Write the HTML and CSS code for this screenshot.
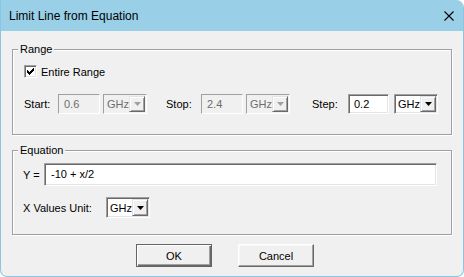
FILE: index.html
```html
<!DOCTYPE html>
<html lang="en">
<head>
<meta charset="utf-8">
<title>Limit Line from Equation</title>
<link rel="stylesheet" href="styles.css">
</head>
<body>
<div class="window">
  <div class="titlebar">
    <span class="title">Limit Line from Equation</span>
    <span class="close" aria-label="Close">
      <svg width="10" height="10" viewBox="0 0 10 10"><path d="M0.5 0.5 L9.5 9.5 M9.5 0.5 L0.5 9.5" stroke="#000" stroke-width="1.1" fill="none"/></svg>
    </span>
  </div>
  <div class="content">
    <fieldset class="group range">
      <legend>Range</legend>
      <div class="check-row">
        <span class="checkbox">
          <svg width="7" height="7" viewBox="0 0 7 7"><path d="M0 2H1V3H2V4H3V3H4V2H5V1H6V0H7V3H6V4H5V5H4V6H3V7H2V6H1V5H0Z" fill="#000"/></svg>
        </span>
        <span>Entire Range</span>
      </div>
      <div class="range-row">
        <div class="field start">
          <span class="lbl">Start:</span>
          <span class="input disabled">0.6</span>
          <span class="combo disabled"><span class="combo-text">GHz</span><span class="combo-btn"><svg width="7" height="4" viewBox="0 0 7 4"><path d="M0 0H7L3.5 4Z"/></svg></span></span>
        </div>
        <div class="field stop">
          <span class="lbl">Stop:</span>
          <span class="input disabled">2.4</span>
          <span class="combo disabled"><span class="combo-text">GHz</span><span class="combo-btn"><svg width="7" height="4" viewBox="0 0 7 4"><path d="M0 0H7L3.5 4Z"/></svg></span></span>
        </div>
        <div class="field step">
          <span class="lbl">Step:</span>
          <span class="input">0.2</span>
          <span class="combo"><span class="combo-text">GHz</span><span class="combo-btn"><svg width="7" height="4" viewBox="0 0 7 4"><path d="M0 0H7L3.5 4Z"/></svg></span></span>
        </div>
      </div>
    </fieldset>
    <fieldset class="group equation">
      <legend>Equation</legend>
      <div class="y-row">
        <span class="lbl">Y =</span>
        <span class="input wide">-10 + x/2</span>
      </div>
      <div class="unit-row">
        <span class="lbl">X Values Unit:</span>
        <span class="combo tall"><span class="combo-text">GHz</span><span class="combo-btn"><svg width="7" height="4" viewBox="0 0 7 4"><path d="M0 0H7L3.5 4Z"/></svg></span></span>
      </div>
    </fieldset>
    <div class="buttons">
      <span class="btn default">OK</span>
      <span class="btn">Cancel</span>
    </div>
  </div>
</div>
</body>
</html>
```
FILE: styles.css
```css
* { box-sizing: border-box; }
html, body { margin: 0; padding: 0; background: #fff; }
body {
  font-family: "Liberation Sans", Arial, sans-serif;
  font-size: 11px;
  color: #000;
}
.window {
  width: 464px;
  height: 277px;
  background: #f0f0f0;
  border: 1px solid #8cc5e0;
  border-top: 0;
  border-radius: 0 8px 7px 7px;
  overflow: hidden;
  display: flex;
  flex-direction: column;
}
.titlebar {
  height: 31px;
  flex: none;
  background: #99d0e8;
  display: flex;
  align-items: center;
  justify-content: space-between;
  padding: 0 9px 0 8px;
}
.title { font-size: 12px; line-height: 31px; padding-top: 1px; }
.close { display: flex; width: 10px; height: 10px; margin-top: 0; }
.close svg { display: block; }
.content {
  flex: 1;
  padding: 12px 11px 0 11px;
  display: flex;
  flex-direction: column;
}
.group {
  margin: 0;
  min-width: 0;
  border: 1px solid #a0a0a0;
  box-shadow: inset 1px 1px 0 #fff, 1px 1px 0 #fff;
}
.group legend {
  padding: 0 2px;
  line-height: 13px;
  height: 13px;
  background: #f0f0f0;
}
.range { padding: 9px 14px 20px 11px; }
.range legend { margin-left: -6px; }
.equation { margin-top: 9px; padding: 6px 14px 16px 10px; }
.equation legend { margin-left: -5px; }

.check-row { display: flex; align-items: center; gap: 4px; height: 13px; }
.checkbox {
  width: 13px; height: 13px; flex: none;
  background: #fff;
  border: 1px solid;
  border-color: #a0a0a0 #fff #fff #a0a0a0;
  box-shadow: inset 1px 1px 0 #696969, inset -1px -1px 0 #e3e3e3;
  padding: 2px;
}
.checkbox svg { display: block; }

.range-row { display: flex; align-items: center; margin-top: 16px; height: 20px; }
.field { display: flex; align-items: center; height: 20px; }
.field .lbl { flex: none; }
.start .lbl { width: 34px; }
.stop { margin-left: 19px; }
.stop .lbl { width: 35px; }
.step { margin-left: 22px; }
.step .lbl { width: 36px; }
.step .input { width: 41px; }
.step .combo { margin-left: 5px; }

.input {
  display: flex; align-items: center;
  width: 42px; height: 20px; flex: none;
  background: #fff;
  border: 1px solid;
  border-color: #a0a0a0 #fff #fff #a0a0a0;
  box-shadow: inset 1px 1px 0 #696969, inset -1px -1px 0 #e3e3e3;
  padding: 0 0 1px 5px;
}
.input.disabled {
  background: #f0f0f0;
  color: #6d6d6d;
  box-shadow: inset 1px 1px 0 #f0f0f0, inset -1px -1px 0 #f0f0f0;
}
.combo {
  display: flex; flex: none;
  width: 44px; height: 20px;
  margin-left: 3px;
  border: 1px solid;
  border-color: #a0a0a0 #fff #fff #a0a0a0;
  box-shadow: inset 1px 1px 0 #696969, inset -1px -1px 0 #e3e3e3;
  padding: 1px;
  background: #fff;
}
.combo-text {
  flex: 1;
  display: flex; align-items: center;
  padding-left: 2px;
  background: #fff;
}
.combo-btn {
  width: 16px; flex: none;
  display: flex; align-items: center; justify-content: center;
  background: #f0f0f0;
  border: 1px solid;
  border-color: #e3e3e3 #696969 #696969 #e3e3e3;
  box-shadow: inset 1px 1px 0 #fff, inset -1px -1px 0 #a0a0a0;
}
.combo-btn svg { display: block; fill: #000; }
.combo.disabled { background: #f0f0f0; box-shadow: inset 1px 1px 0 #f0f0f0, inset -1px -1px 0 #f0f0f0; }
.combo.disabled .combo-text { background: #f0f0f0; color: #6d6d6d; }
.combo.disabled .combo-btn svg { fill: #a0a0a0; }
.combo.tall { height: 21px; margin-left: 0; }

.y-row { display: flex; align-items: center; height: 23px; }
.y-row .lbl { width: 21px; flex: none; }
.input.wide { flex: 1; width: auto; height: 23px; padding-left: 6px; }
.unit-row { display: flex; align-items: center; margin-top: 11px; height: 21px; }
.unit-row .lbl { width: 83px; flex: none; }

.buttons { display: flex; gap: 26px; margin-top: 9px; padding-left: 124px; }
.btn {
  width: 76px; height: 23px;
  display: flex; align-items: center; justify-content: center;
  background: #f0f0f0;
  border: 1px solid;
  border-color: #fff #696969 #696969 #fff;
  box-shadow: inset -1px -1px 0 #a0a0a0, inset 1px 1px 0 #f7f7f7;
}
.btn.default {
  border-color: #646464;
  box-shadow: inset 1px 1px 0 #fff, inset -1px -1px 0 #696969, inset -2px -2px 0 #a0a0a0;
}
```
